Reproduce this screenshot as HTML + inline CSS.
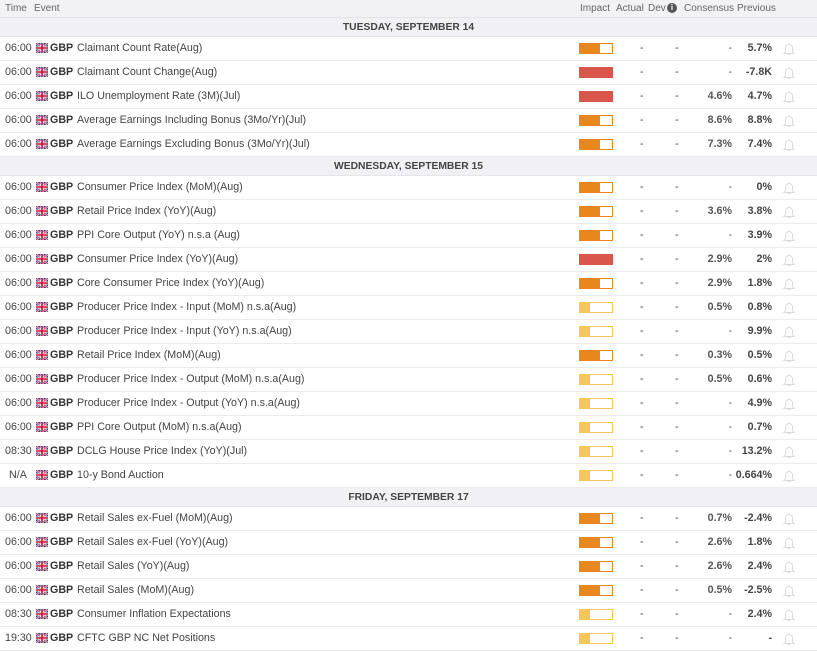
<!DOCTYPE html><html><head><style>
body{margin:0;width:817px;height:652px;overflow:hidden;background:#fff;font-family:"Liberation Sans",sans-serif;font-size:10.7px;color:#444}
.hd{height:17px;background:#f2f2f5;border-bottom:1px solid #e2e2e8;position:relative;color:#666;font-size:10px}
.hd span{position:absolute;top:3px}
.dt{height:18px;background:#f0f0f5;text-align:center;font-weight:bold;font-size:10.3px;line-height:19px;color:#444;border-bottom:1px solid #e6e6ea}
.r{height:23px;border-bottom:1px solid #ebebeb;position:relative;line-height:22px}
.r span{position:absolute}
.t{left:5px}
.c{left:50px;font-weight:bold;color:#333}.e{left:77px}
.b{left:579px;top:6px;width:32px;height:9px;border:1px solid;}
.a{left:640px}.d{left:675px}
.cs{right:85px;text-align:right;font-weight:bold;color:#555}.p{right:45px;text-align:right;font-weight:bold;color:#444}
</style></head><body>
<div class="hd"><span style="left:5px">Time</span><span style="left:34px">Event</span><span style="left:580px">Impact</span><span style="left:616px">Actual</span><span style="left:648px">Dev</span><span style="left:667px;top:3px;width:10px;height:10px;border-radius:50%;background:#555;color:#fff;font-size:8px;text-align:center;line-height:10px;font-weight:bold">i</span><span style="left:684px">Consensus</span><span style="left:737px">Previous</span></div>
<div id="c"></div>
<script>
const U='<svg viewBox="0 0 12 10" width="12" height="10" style="position:absolute;left:36px;top:6px"><rect width="12" height="10" fill="#2a3a8c"/><path d="M0 0L12 10M12 0L0 10" stroke="#fff" stroke-width="2"/><path d="M0 0L12 10M12 0L0 10" stroke="#c8102e" stroke-width="0.8"/><path d="M6 0V10M0 5H12" stroke="#fff" stroke-width="3"/><path d="M6 0V10M0 5H12" stroke="#c8102e" stroke-width="1.6"/></svg>';
const bell='<svg style="position:absolute;left:782px;top:4px" width="14" height="15" viewBox="0 0 14 15"><path d="M7 1.5v1M3.5 11V7a3.5 3.5 0 0 1 7 0v4l1.5 1.5H2z M5.5 13.5h3" fill="none" stroke="#dcdcdc" stroke-width="1"/></svg>';
const O='#e8871e',R='#d9574a',Y='#f5c65a';
function bar(k){if(k==3)return `<span class="b" style="background:${R};border-color:${R}"></span>`;
 const col=k==2?O:Y,w=k==2?20:10;return `<span class="b" style="border-color:${col};background:linear-gradient(90deg,${col} ${w}px,#fff ${w}px)"></span>`}
const D=[["TUESDAY, SEPTEMBER 14",[
["06:00","Claimant Count Rate(Aug)",2,"-","5.7%"],["06:00","Claimant Count Change(Aug)",3,"-","-7.8K"],["06:00","ILO Unemployment Rate (3M)(Jul)",3,"4.6%","4.7%"],["06:00","Average Earnings Including Bonus (3Mo/Yr)(Jul)",2,"8.6%","8.8%"],["06:00","Average Earnings Excluding Bonus (3Mo/Yr)(Jul)",2,"7.3%","7.4%"]]],
["WEDNESDAY, SEPTEMBER 15",[
["06:00","Consumer Price Index (MoM)(Aug)",2,"-","0%"],["06:00","Retail Price Index (YoY)(Aug)",2,"3.6%","3.8%"],["06:00","PPI Core Output (YoY) n.s.a (Aug)",2,"-","3.9%"],["06:00","Consumer Price Index (YoY)(Aug)",3,"2.9%","2%"],["06:00","Core Consumer Price Index (YoY)(Aug)",2,"2.9%","1.8%"],["06:00","Producer Price Index - Input (MoM) n.s.a(Aug)",1,"0.5%","0.8%"],["06:00","Producer Price Index - Input (YoY) n.s.a(Aug)",1,"-","9.9%"],["06:00","Retail Price Index (MoM)(Aug)",2,"0.3%","0.5%"],["06:00","Producer Price Index - Output (MoM) n.s.a(Aug)",1,"0.5%","0.6%"],["06:00","Producer Price Index - Output (YoY) n.s.a(Aug)",1,"-","4.9%"],["06:00","PPI Core Output (MoM) n.s.a(Aug)",1,"-","0.7%"],["08:30","DCLG House Price Index (YoY)(Jul)",1,"-","13.2%"],["N/A","10-y Bond Auction",1,"-","0.664%"]]],
["FRIDAY, SEPTEMBER 17",[
["06:00","Retail Sales ex-Fuel (MoM)(Aug)",2,"0.7%","-2.4%"],["06:00","Retail Sales ex-Fuel (YoY)(Aug)",2,"2.6%","1.8%"],["06:00","Retail Sales (YoY)(Aug)",2,"2.6%","2.4%"],["06:00","Retail Sales (MoM)(Aug)",2,"0.5%","-2.5%"],["08:30","Consumer Inflation Expectations",1,"-","2.4%"],["19:30","CFTC GBP NC Net Positions",1,"-","-"]]]];
let h='';for(const [d,rows] of D){h+=`<div class="dt">${d}</div>`;for(const r of rows){h+=`<div class="r"><span class="t" style="${r[0]=='N/A'?'left:9px':''}">${r[0]}</span>${U}<span class="c">GBP</span><span class="e">${r[1]}</span>${bar(r[2])}<span class="a">-</span><span class="d">-</span><span class="cs" style="${r[3]=='-'?'font-weight:normal':''}">${r[3]}</span><span class="p">${r[4]}</span>${bell}</div>`}}
document.getElementById('c').innerHTML=h;
</script></body></html>
